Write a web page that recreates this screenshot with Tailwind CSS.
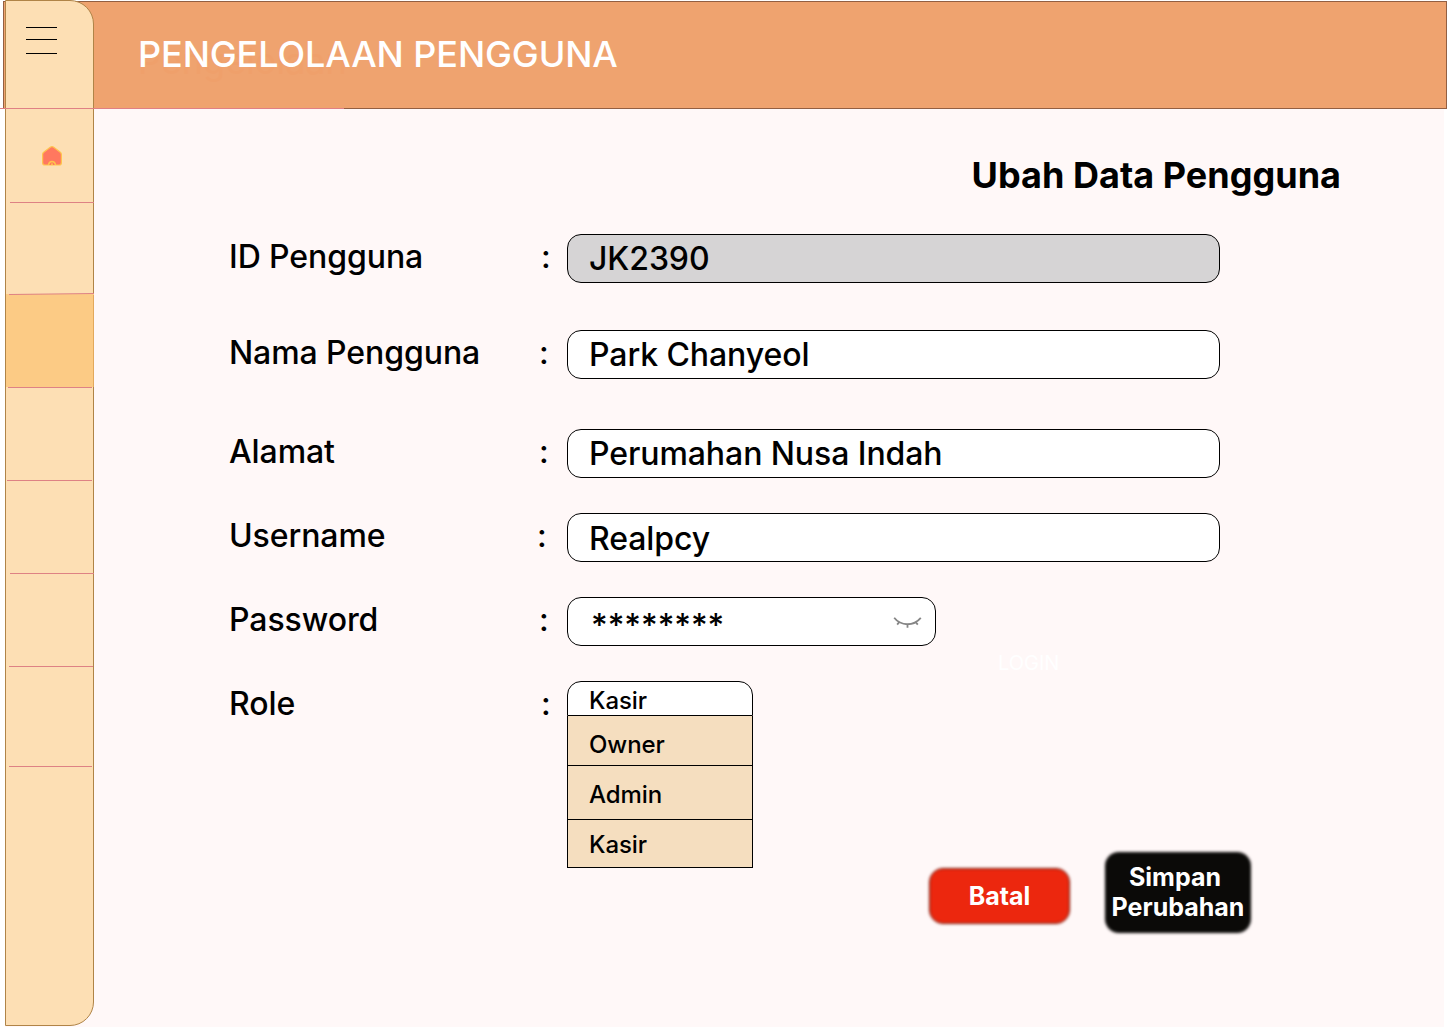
<!DOCTYPE html>
<html lang="id">
<head>
<meta charset="utf-8">
<title>Pengelolaan Pengguna</title>
<script src="https://cdn.jsdelivr.net/npm/@tailwindcss/browser@4"></script>
</head>
<body class="bg-white">
<div class="grid h-[1027px] w-[1447px] overflow-hidden font-['Inter',sans-serif] font-medium text-black">
  <div class="col-start-1 row-start-1 flex flex-col">
    <header class="mt-px ml-[3px] grid h-[108px] shrink-0 border border-[#935f42] bg-[#efa36f] pl-[134px] text-4xl leading-[44px] whitespace-nowrap">
      <span aria-hidden="true" class="col-start-1 row-start-1 mt-[37px] font-normal text-[#efa06b]">Pengelolaan</span>
      <h1 class="col-start-1 row-start-1 mt-[30px] tracking-[-0.09px] text-white">PENGELOLAAN PENGGUNA</h1>
    </header>
    <main class="mr-[3px] ml-[5px] flex grow flex-col bg-[#fff8f8] pl-[224px] tracking-[-0.08px]">
      <h2 class="mt-[44px] mr-[103px] self-end text-4xl leading-[44px] font-bold tracking-[0.02px]">Ubah Data Pengguna</h2>
      <div class="mt-[37px] flex h-[49px] text-[32px] leading-[46px]">
        <label class="w-[312px]">ID Pengguna</label><span class="w-[26px]">:</span>
        <div class="w-[653px] rounded-[14px] border border-black bg-[#d6d4d5] pl-[21px] leading-[48px]">JK2390</div>
      </div>
      <div class="mt-[47px] flex h-[49px] text-[32px] leading-[46px]">
        <label class="w-[310px]">Nama Pengguna</label><span class="w-[28px]">:</span>
        <div class="w-[653px] rounded-[14px] border border-black bg-white pl-[21px] leading-[48px]">Park Chanyeol</div>
      </div>
      <div class="mt-[50px] flex h-[49px] text-[32px] leading-[46px]">
        <label class="w-[310px]">Alamat</label><span class="w-[28px]">:</span>
        <div class="w-[653px] rounded-[14px] border border-black bg-white pl-[21px] leading-[48px]">Perumahan Nusa Indah</div>
      </div>
      <div class="mt-[35px] flex h-[49px] text-[32px] leading-[46px]">
        <label class="w-[308px]">Username</label><span class="w-[30px]">:</span>
        <div class="w-[653px] rounded-[14px] border border-black bg-white pl-[21px] leading-[50px]">Realpcy</div>
      </div>
      <div class="mt-[35px] flex h-[49px] text-[32px] leading-[46px]">
        <label class="w-[310px]">Password</label><span class="w-[28px]">:</span>
        <div class="flex w-[369px] items-start justify-between rounded-[14px] border border-black bg-white pr-[13px] pl-[23px] tracking-normal">
          <span class="leading-[56px]">********</span>
          <svg class="mt-[18px] h-3 w-[29px]" viewBox="0 0 29 12" fill="none" stroke="#858585" stroke-width="1.8"><path d="M1.2 1.8C8 10.4 20.5 10.4 27.8 1.8M6.4 5.8L4.2 8.6M14.5 8.2V11.8M22.4 5.8L24.8 8.6"/></svg>
        </div>
      </div>
      <div class="flex">
        <div class="mt-[35px] flex w-[524px] text-[32px] leading-[46px]">
          <label class="w-[312px]">Role</label><span class="w-[26px]">:</span>
          <div class="flex h-[187px] w-[186px] flex-col text-2xl">
            <div class="h-[35px] rounded-t-[14px] border border-black bg-white pl-[21px] leading-[37px]">Kasir</div>
            <div class="h-[50px] border border-t-0 border-black bg-[#f5debf] pl-[21px] leading-[57px]">Owner</div>
            <div class="h-[54px] border border-t-0 border-black bg-[#f5debf] pl-[21px] leading-[57px]">Admin</div>
            <div class="h-12 border border-t-0 border-black bg-[#f5debf] pl-[21px] leading-[49px]">Kasir</div>
          </div>
        </div>
        <span class="mt-[5px] ml-[245px] text-xl leading-6 font-normal tracking-normal text-white">LOGIN</span>
      </div>
      <div class="-mt-4 ml-[700px] flex gap-[34px] text-[25px] leading-[30px] font-bold tracking-normal text-white">
        <button class="mt-4 grid h-14 w-[142px] place-items-center">
          <span class="col-start-1 row-start-1 h-full w-[141px] justify-self-start rounded-[14px] border border-[#601407] bg-[#ec270e] blur-[1.5px]"></span>
          <span class="z-10 col-start-1 row-start-1 mr-px">Batal</span>
        </button>
        <button class="grid h-[81px] w-[146px] place-items-center whitespace-nowrap">
          <span class="col-start-1 row-start-1 h-full w-full rounded-[14px] bg-[#0b0a08] blur-[1.5px]"></span>
          <span class="z-10 col-start-1 row-start-1 mb-0.5"><span class="-ml-1.5">Simpan</span><br>Perubahan</span>
        </button>
      </div>
    </main>
  </div>

  <aside class="z-10 col-start-1 row-start-1 ml-[5px] flex h-[1026px] w-[89px] flex-col rounded-r-3xl border border-[#b08447] bg-[#fddfb4]">
    <div class="mt-[26px] ml-5 h-px w-[31px] shrink-0 bg-black"></div>
    <div class="mt-[11px] ml-5 h-px w-[31px] shrink-0 bg-black"></div>
    <div class="mt-[13px] ml-5 h-px w-[31px] shrink-0 bg-black"></div>
    <div class="mt-[54px] -ml-[6px] h-px w-[344px] shrink-0 bg-[#e08084]"></div>
    <svg class="mt-[37px] ml-9 h-5 w-5 shrink-0" viewBox="0 0 20 20"><path d="M8.6 1.1Q10 .2 11.4 1.1L18 6Q19.4 7 19.4 8.6V16.4Q19.4 19 17 19H3Q.6 19 .6 16.4V8.6Q.6 7 2 6Z" fill="#ff785f" stroke="#ffc34d" stroke-width="1.2"/><path d="M6.5 19Q7 15.6 10 15.6T13.5 19" fill="#ff785f" stroke="#ffc34d" stroke-width="1.5"/><circle cx="10" cy="18.3" r="1" fill="#ffc34d"/></svg>
    <div class="mt-[36px] ml-1 h-px w-[84px] shrink-0 bg-[#de8284]"></div>
    <svg class="mt-[90px] h-[2px] w-[88px] shrink-0" viewBox="0 0 88 2"><path d="M0 1H88V2H0Z" fill="#fccb85"/><path d="M3 1.5L88 .5" stroke="#de8284" stroke-width="1"/></svg>
    <div class="h-[92px] w-[88px] shrink-0 border-r border-[#e3a95c] bg-[#fccb85]"></div>
    <div class="ml-0.5 h-px w-[84px] shrink-0 bg-[#de8284]"></div>
    <div class="mt-[92px] ml-px h-px w-[85px] shrink-0 bg-[#de8284]"></div>
    <div class="mt-[92px] ml-1 h-px w-[84px] shrink-0 bg-[#de8284]"></div>
    <div class="mt-[92px] ml-[3px] h-px w-[84px] shrink-0 bg-[#de8284]"></div>
    <div class="mt-[99px] ml-[3px] h-px w-[83px] shrink-0 bg-[#de8284]"></div>
  </aside>
</div>
</body>
</html>
